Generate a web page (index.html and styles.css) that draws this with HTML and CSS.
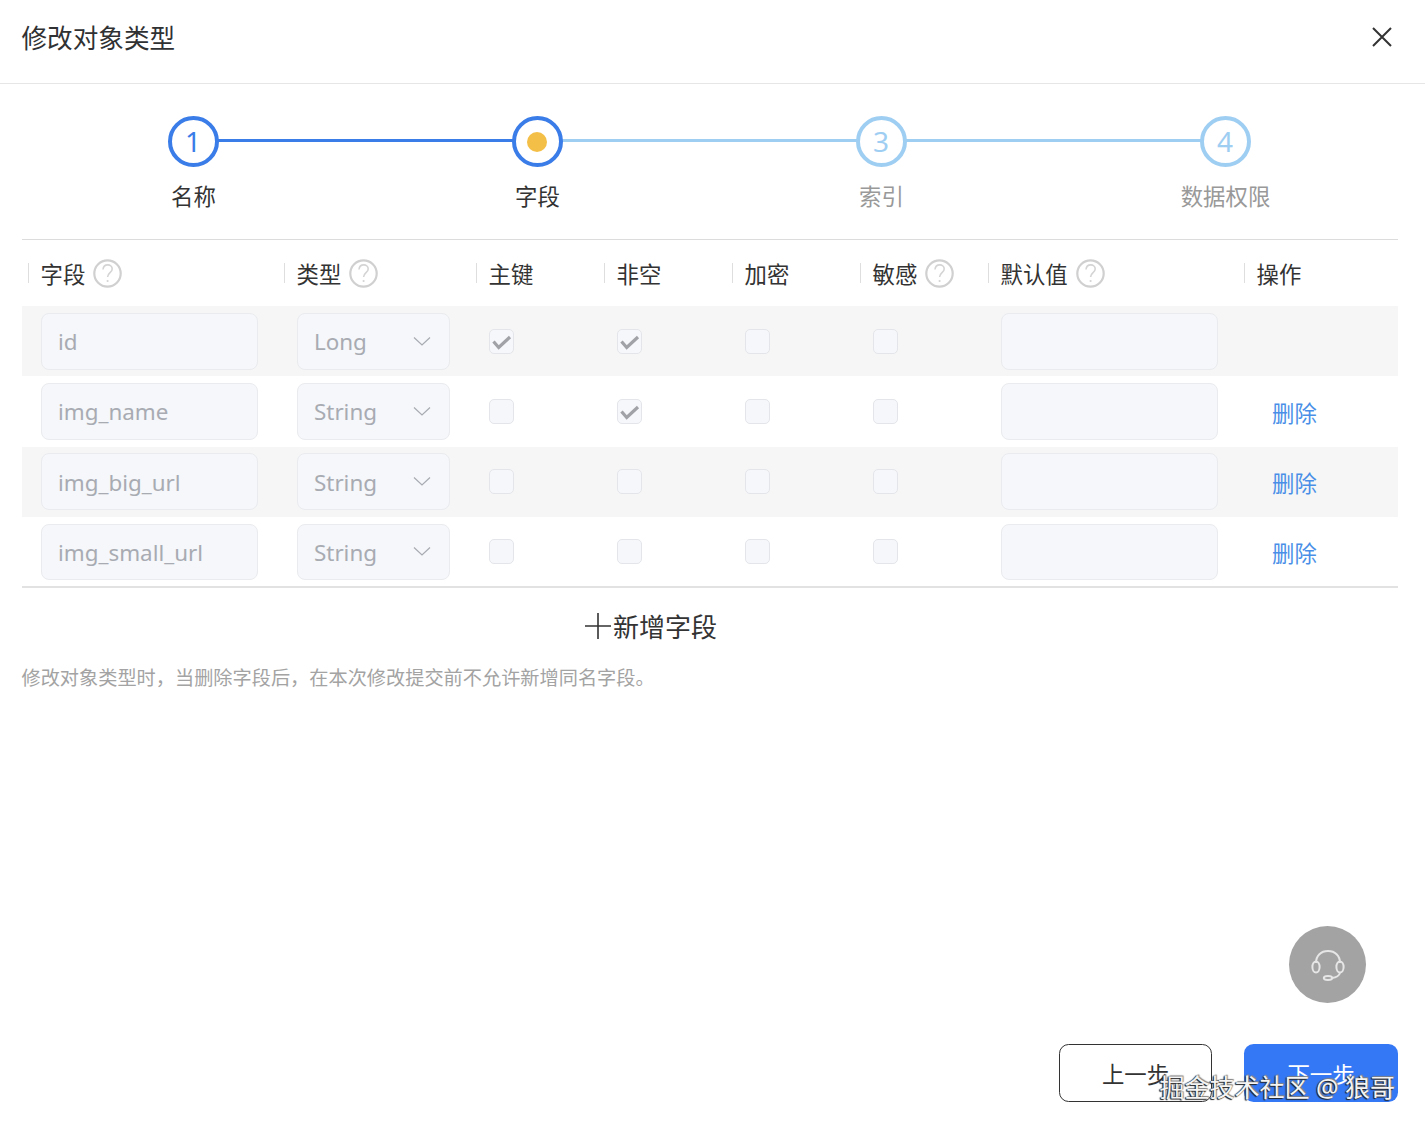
FILE: index.html
```html
<!DOCTYPE html>
<html lang="zh-CN">
<head>
<meta charset="utf-8">
<title>修改对象类型</title>
<link rel="stylesheet" href="styles.css">
</head>
<body>
<svg class="defs" width="0" height="0" aria-hidden="true">
  <defs>
    <symbol id="help" viewBox="0 0 29 29">
      <circle cx="14.5" cy="14.5" r="13.2" fill="none" stroke="#d0d0d0" stroke-width="2.2"/>
      <path d="M10 10.5c.3-3 2.2-4.6 4.7-4.6 2.6 0 4.500 1.700 4.500 4 0 3.600-4.600 3.900-4.600 8" fill="none" stroke="#d4d4d4" stroke-width="1.600"/>
      <circle cx="14.600" cy="22" r="1.100" fill="#d4d4d4"/>
    </symbol>
    <symbol id="arrow" viewBox="0 0 18 10">
      <path d="M1 1.500l8 7.500 8-7.500" fill="none" stroke="#a8abb2" stroke-width="1.200"/>
    </symbol>
    <symbol id="tick" viewBox="0 0 25 25">
      <path d="M4.500 12.500l5.200 6L21 8" fill="none" stroke="#a0a2a8" stroke-width="3.200"/>
    </symbol>
  </defs>
</svg>
<div class="dialog">
  <header class="head">
    <h1 class="title">修改对象类型</h1>
    <svg class="close" width="22" height="22" viewBox="0 0 22 22"><path d="M2 2l18 18M20 2L2 20" stroke="#333" stroke-width="2" fill="none"/></svg>
  </header>

  <div class="steps">
    <div class="step done"><div class="dot">1</div><div class="label">名称</div></div>
    <div class="step current"><div class="dot"><span class="pip"></span></div><div class="label">字段</div></div>
    <div class="step todo"><div class="dot">3</div><div class="label">索引</div></div>
    <div class="step todo last"><div class="dot">4</div><div class="label">数据权限</div></div>
  </div>

  <section class="table">
    <div class="row header">
      <div class="th"><span>字段</span><svg class="qm"><use href="#help"/></svg></div>
      <div class="th"><span>类型</span><svg class="qm"><use href="#help"/></svg></div>
      <div class="th"><span>主键</span></div>
      <div class="th"><span>非空</span></div>
      <div class="th"><span>加密</span></div>
      <div class="th"><span>敏感</span><svg class="qm"><use href="#help"/></svg></div>
      <div class="th"><span>默认值</span><svg class="qm"><use href="#help"/></svg></div>
      <div class="th"><span>操作</span></div>
    </div>

    <div class="row striped">
      <div class="td"><div class="field name">id</div></div>
      <div class="td"><div class="field type">Long<svg class="chev"><use href="#arrow"/></svg></div></div>
      <div class="td"><div class="check"><svg class="tick"><use href="#tick"/></svg></div></div>
      <div class="td"><div class="check"><svg class="tick"><use href="#tick"/></svg></div></div>
      <div class="td"><div class="check"></div></div>
      <div class="td"><div class="check"></div></div>
      <div class="td"><div class="field name"></div></div>
      <div class="td"></div>
    </div>

    <div class="row">
      <div class="td"><div class="field name">img_name</div></div>
      <div class="td"><div class="field type">String<svg class="chev"><use href="#arrow"/></svg></div></div>
      <div class="td"><div class="check"></div></div>
      <div class="td"><div class="check"><svg class="tick"><use href="#tick"/></svg></div></div>
      <div class="td"><div class="check"></div></div>
      <div class="td"><div class="check"></div></div>
      <div class="td"><div class="field name"></div></div>
      <div class="td"><a class="del">删除</a></div>
    </div>

    <div class="row striped">
      <div class="td"><div class="field name">img_big_url</div></div>
      <div class="td"><div class="field type">String<svg class="chev"><use href="#arrow"/></svg></div></div>
      <div class="td"><div class="check"></div></div>
      <div class="td"><div class="check"></div></div>
      <div class="td"><div class="check"></div></div>
      <div class="td"><div class="check"></div></div>
      <div class="td"><div class="field name"></div></div>
      <div class="td"><a class="del">删除</a></div>
    </div>

    <div class="row last-row">
      <div class="td"><div class="field name">img_small_url</div></div>
      <div class="td"><div class="field type">String<svg class="chev"><use href="#arrow"/></svg></div></div>
      <div class="td"><div class="check"></div></div>
      <div class="td"><div class="check"></div></div>
      <div class="td"><div class="check"></div></div>
      <div class="td"><div class="check"></div></div>
      <div class="td"><div class="field name"></div></div>
      <div class="td"><a class="del">删除</a></div>
    </div>
  </section>

  <div class="add">
    <svg class="plus" width="26" height="26" viewBox="0 0 26 26"><path d="M0 13h26M13 0v26" stroke="#333" stroke-width="1.600" fill="none"/></svg>
    <span>新增字段</span>
  </div>
  <p class="tip">修改对象类型时，当删除字段后，在本次修改提交前不允许新增同名字段。</p>

  <footer class="foot">
    <button class="btn prev">上一步</button>
    <button class="btn next">下一步</button>
  </footer>
</div>

<div class="support">
  <svg width="36" height="32" viewBox="0 0 36 32" fill="none" stroke="#e6e6e6" stroke-width="2">
    <path d="M6 14C6 6.500 11 2 18 2s12 4.500 12 12"/>
    <ellipse cx="6" cy="18" rx="3.600" ry="5.600"/>
    <ellipse cx="30" cy="18" rx="3.600" ry="5.600"/>
    <path d="M30 24c-1 3-3.500 4.500-8 5"/>
    <ellipse cx="18" cy="29" rx="4.200" ry="2"/>
  </svg>
</div>
<div class="mark">掘金技术社区 @ 狼哥</div>
</body>
</html>
```
FILE: styles.css
```css
* { box-sizing: border-box; }
html, body { margin: 0; padding: 0; }
body {
  width: 1425px;
  height: 1131px;
  overflow: hidden;
  position: relative;
  background: #fff;
  color: #333;
  font-family: "Noto Sans", "Noto Sans CJK SC", sans-serif;
}
.defs { position: absolute; }
.dialog { height: 100%; display: flex; flex-direction: column; }

.head {
  height: 84px;
  flex: none;
  padding: 0 32px 8px 21.500px;
  border-bottom: 1px solid #e6e6e6;
  display: flex;
  align-items: center;
  justify-content: space-between;
}
.title { margin: 2px 0 0; font-size: 25.600px; font-weight: 400; line-height: 38px; color: #303133; }
.close { margin-top: -2px; }

.steps {
  flex: none;
  margin: 0 27px 0 22px;
  padding: 32px 0 26px;
  display: flex;
  border-bottom: 1px solid #dcdcdc;
  height: 156px;
}
.step { flex: none; width: 344px; position: relative; display: flex; flex-direction: column; align-items: center; }
.step:first-child { margin-left: -1px; }
.step::after {
  content: "";
  position: absolute;
  top: 23px;
  left: calc(50% + 24px);
  width: calc(100% - 48px);
  height: 3px;
  background: #3a7ce8;
}
.step.current::after, .step.todo::after { background: #9fcef3; }
.step.last::after { display: none; }
.dot {
  width: 51px;
  height: 51px;
  border: 4px solid #3a7ce8;
  border-radius: 50%;
  background: #fff;
  color: #3a7ce8;
  font-size: 28px;
  display: flex;
  align-items: center;
  justify-content: center;
  padding-bottom: 2px;
  position: relative;
  z-index: 1;
}
.current .dot { padding-bottom: 0; }
.todo .dot { border-color: #9fcef3; color: #9fcef3; }
.pip { width: 20px; height: 20px; border-radius: 50%; background: #f4bf47; }
.label { margin-top: 14px; padding-left: 1px; font-size: 22.400px; line-height: 32px; color: #333; }
.todo .label { color: #999; }

.table { flex: none; margin: 0 27px 0 22px; border-bottom: 2px solid #e2e2e2; }
.row {
  display: grid;
  grid-template-columns: 256px 192px 128px 128px 128px 128px 256px 154px;
  padding-left: 6px;
  height: 70.200px;
  align-items: center;
}
.row.header { height: 66.200px; padding-top: 2px; }
.row.striped { background: #f6f6f6; }
.row.last-row { margin-bottom: -1px; }
.th {
  position: relative;
  display: flex;
  align-items: center;
  gap: 8px;
  padding-left: 12.500px;
  font-size: 22.400px;
  line-height: 30px;
  color: #333;
}
.th span { padding-top: 2px; }
.th::before {
  content: "";
  position: absolute;
  left: 0;
  top: 5px;
  width: 1px;
  height: 20px;
  background: #dedede;
}
.qm { width: 29px; height: 29px; flex: none; margin-top: -2px; }
.td { padding-left: 13px; }
.field {
  height: 56.600px;
  border: 1.600px solid #e9ebee;
  border-radius: 8px;
  background: #f5f7fa;
  color: #a8abb2;
  font-size: 22.400px;
  display: flex;
  align-items: center;
  padding: 1px 0 0 16px;
}
.name { width: 217px; }
.type { width: 153px; justify-content: space-between; padding-right: 18px; }
.chev { width: 18px; height: 10px; flex: none; margin-top: -2px; }
.check {
  width: 25px;
  height: 25px;
  border: 1.600px solid #e3e5ea;
  border-radius: 5px;
  background: #f5f7fa;
  display: flex;
  align-items: center;
  justify-content: center;
}
.tick { width: 25px; height: 25px; flex: none; }
.del { display: block; margin: 5px 0 0 15px; font-size: 22.400px; line-height: 30px; color: #4a8fe7; }

.add {
  flex: none;
  margin: 20px 145px 0 22px;
  height: 36px;
  display: flex;
  align-items: center;
  justify-content: center;
  gap: 2px;
  font-size: 26px;
  color: #333;
}
.tip { margin: 20px 0 0 21.500px; font-size: 19.200px; line-height: 28px; color: #a3a3a3; }

.foot {
  margin-top: auto;
  padding: 0 27px 29px 0;
  display: flex;
  justify-content: flex-end;
  gap: 32px;
}
.btn {
  height: 58px;
  border-radius: 9.600px;
  font: inherit;
  font-size: 22.400px;
  padding: 0;
}
.prev { width: 153px; background: #fff; border: 1.300px solid #333; color: #333; }
.next { width: 154px; background: #3478f6; border: 0; color: #fff; }

.support {
  position: absolute;
  left: 1289px;
  top: 925.500px;
  width: 77px;
  height: 77px;
  border-radius: 50%;
  background: #a3a3a3;
  display: flex;
  align-items: center;
  justify-content: center;
  padding-top: 2px;
}
.mark {
  position: absolute;
  right: 30px;
  top: 1068px;
  font-size: 25px;
  line-height: 38px;
  white-space: nowrap;
  color: #f4f4f4;
  text-shadow: -1px 1px 1px #222, -1px 0 1px #444, 1px -1px 1px #888;
}
```
